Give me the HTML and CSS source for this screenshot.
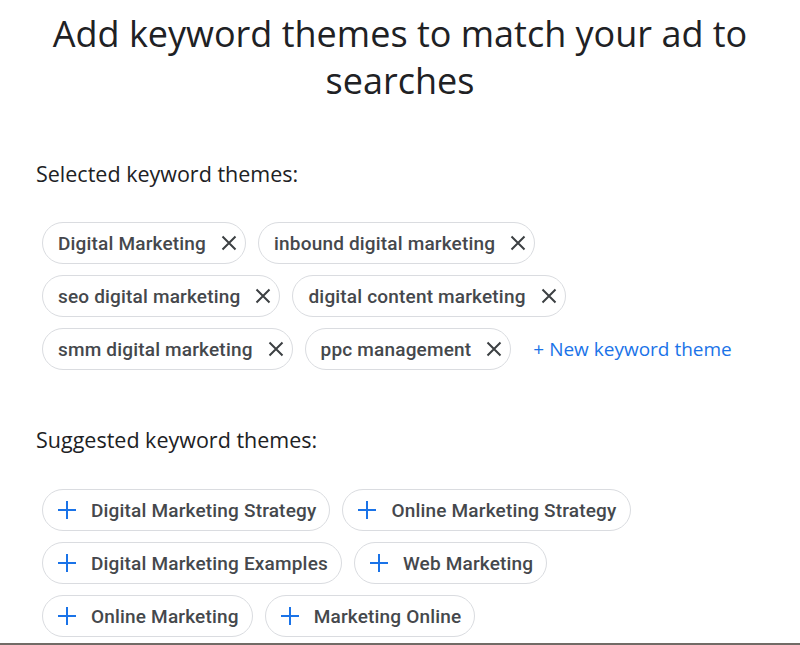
FILE: index.html
```html
<!DOCTYPE html>
<html>
<head>
<meta charset="utf-8">
<link rel="stylesheet" href="styles.css">
</head>
<body>
<div class="page">
  <h1 class="title">Add keyword themes to match your ad to searches</h1>

  <section class="group">
    <h2 class="label">Selected keyword themes:</h2>
    <div class="chips">
      <span class="chip chip-sel"><span class="chip-text">Digital Marketing</span><svg class="x" viewBox="0 0 16 16"><path d="M1.5 1.5L14.5 14.5M14.5 1.5L1.5 14.5"/></svg></span>
      <span class="chip chip-sel"><span class="chip-text">inbound digital marketing</span><svg class="x" viewBox="0 0 16 16"><path d="M1.5 1.5L14.5 14.5M14.5 1.5L1.5 14.5"/></svg></span>
      <span class="chip chip-sel"><span class="chip-text">seo digital marketing</span><svg class="x" viewBox="0 0 16 16"><path d="M1.5 1.5L14.5 14.5M14.5 1.5L1.5 14.5"/></svg></span>
      <span class="chip chip-sel"><span class="chip-text">digital content marketing</span><svg class="x" viewBox="0 0 16 16"><path d="M1.5 1.5L14.5 14.5M14.5 1.5L1.5 14.5"/></svg></span>
      <span class="chip chip-sel"><span class="chip-text">smm digital marketing</span><svg class="x" viewBox="0 0 16 16"><path d="M1.5 1.5L14.5 14.5M14.5 1.5L1.5 14.5"/></svg></span>
      <span class="chip chip-sel"><span class="chip-text">ppc management</span><svg class="x" viewBox="0 0 16 16"><path d="M1.5 1.5L14.5 14.5M14.5 1.5L1.5 14.5"/></svg></span>
      <span class="new-link">+ New keyword theme</span>
    </div>
  </section>

  <section class="group group-sugg">
    <h2 class="label">Suggested keyword themes:</h2>
    <div class="chips">
      <span class="chip chip-add"><svg class="plus" viewBox="0 0 18 18"><path d="M9 0V18M0 9H18"/></svg><span class="chip-text">Digital Marketing Strategy</span></span>
      <span class="chip chip-add"><svg class="plus" viewBox="0 0 18 18"><path d="M9 0V18M0 9H18"/></svg><span class="chip-text">Online Marketing Strategy</span></span>
      <span class="chip chip-add"><svg class="plus" viewBox="0 0 18 18"><path d="M9 0V18M0 9H18"/></svg><span class="chip-text">Digital Marketing Examples</span></span>
      <span class="chip chip-add"><svg class="plus" viewBox="0 0 18 18"><path d="M9 0V18M0 9H18"/></svg><span class="chip-text">Web Marketing</span></span>
      <span class="chip chip-add"><svg class="plus" viewBox="0 0 18 18"><path d="M9 0V18M0 9H18"/></svg><span class="chip-text">Online Marketing</span></span>
      <span class="chip chip-add"><svg class="plus" viewBox="0 0 18 18"><path d="M9 0V18M0 9H18"/></svg><span class="chip-text">Marketing Online</span></span>
    </div>
  </section>
</div>
<div class="bottom-line"></div>
</body>
</html>
```
FILE: styles.css
```css
html, body {
  margin: 0;
  padding: 0;
  background: #ffffff;
}
body {
  width: 800px;
  height: 645px;
  overflow: hidden;
  position: relative;
}
.page {
  padding: 10px 0 0 36px;
}
.title {
  margin: 0;
  padding-right: 36px;
  text-align: center;
  font-family: "Open Sans", sans-serif;
  font-weight: 400;
  font-size: 36px;
  line-height: 47px;
  color: #202124;
}
.group {
  margin-top: 56px;
}
.group-sugg {
  margin-top: 56px;
}
.label {
  margin: 0;
  font-family: "Open Sans", sans-serif;
  font-weight: 400;
  font-size: 21.5px;
  line-height: 28px;
  color: #202124;
}
.chips {
  margin-top: 34px;
  padding-left: 6px;
  display: flex;
  flex-wrap: wrap;
  align-items: center;
  column-gap: 12px;
  row-gap: 11px;
  width: 720px;
}
.group-sugg .chips {
  margin-top: 35px;
}
.chip {
  box-sizing: border-box;
  height: 42px;
  border: 1px solid #dadce0;
  border-radius: 21px;
  display: inline-flex;
  align-items: center;
  font-family: Roboto, sans-serif;
  font-size: 19px;
  font-weight: 500;
  color: #45484c;
  letter-spacing: 0.18px;
  white-space: nowrap;
}
.chip-sel {
  padding: 0 8px 0 15px;
}
.chip-sel .x {
  width: 16px;
  height: 16px;
  margin-left: 15px;
  stroke: #3c4043;
  stroke-width: 2;
  fill: none;
}
.chip-add {
  padding: 0 13px 0 15px;
}
.chip-add .plus {
  width: 18px;
  height: 18px;
  margin-right: 15px;
  stroke: #1a73e8;
  stroke-width: 2;
  fill: none;
}
.new-link {
  margin-left: 10px;
  font-family: "Open Sans", sans-serif;
  font-size: 19px;
  font-weight: 500;
  color: #1a73e8;
  white-space: nowrap;
}
.bottom-line {
  position: absolute;
  left: 0;
  right: 0;
  bottom: 0;
  height: 2px;
  background: #716b66;
}
```
